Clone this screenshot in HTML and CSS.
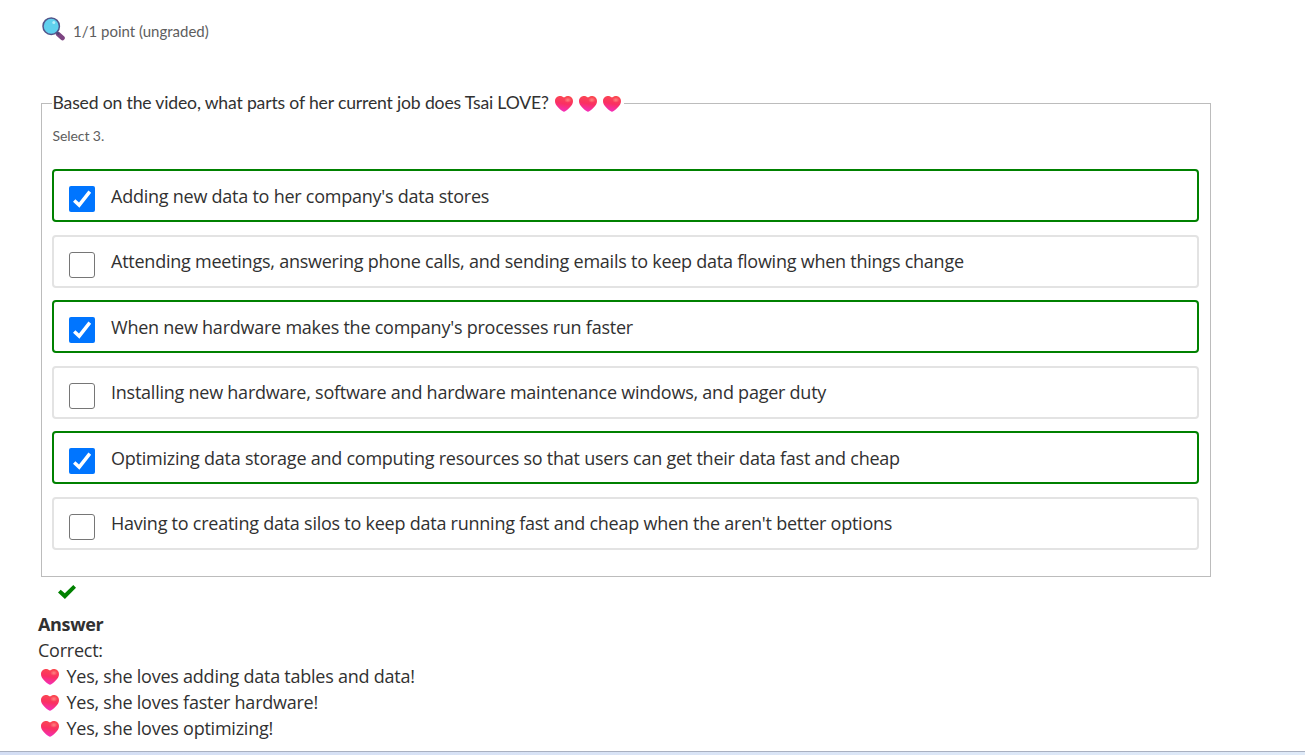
FILE: index.html
```html
<!DOCTYPE html>
<html lang="en">
<head>
<meta charset="utf-8">
<title>Problem</title>
<link rel="stylesheet" href="styles.css">
</head>
<body>
<svg class="defs" aria-hidden="true">
  <defs>
    <linearGradient id="heart-fill" x1="0.65" y1="0" x2="0.45" y2="1">
      <stop offset="0" stop-color="#fb4a50"/>
      <stop offset="0.5" stop-color="#fa3063"/>
      <stop offset="1" stop-color="#f42fbd"/>
    </linearGradient>
    <radialGradient id="heart-shine">
      <stop offset="0" stop-color="#ff8d86" stop-opacity=".9"/>
      <stop offset="1" stop-color="#ff8d86" stop-opacity="0"/>
    </radialGradient>
    <symbol id="heart" viewBox="0 0 18 16">
      <path fill="url(#heart-fill)" d="M9 1.600C7.900.6 6.500 0 5 0 2.200 0 0 2.200 0 5.200c0 4.200 4.400 7.400 7.400 9.900 1 .9 2.200.9 3.200 0C13.600 12.600 18 9.400 18 5.200 18 2.200 15.800 0 13 0 11.500 0 10.100.6 9 1.600z"/>
      <ellipse cx="12.800" cy="4" rx="3.600" ry="2.800" fill="url(#heart-shine)"/>
    </symbol>
    <symbol id="tick" viewBox="0 0 26 26">
      <path d="M5.200 14.500l5 4.600L20.800 5.600" fill="none" stroke="#fff" stroke-width="3.500"/>
    </symbol>
  </defs>
</svg>
<main class="problem">
  <div class="progress">
    <svg class="lens" viewBox="0 0 24 24">
      <path d="M16 17l4.500 4" stroke="#7d4481" stroke-width="4.600" stroke-linecap="round"/>
      <path d="M14.500 15l2.500 2.500" stroke="#4b4775" stroke-width="2"/>
      <circle cx="9.200" cy="9.200" r="8.200" fill="#5fd0ee" stroke="#51548a" stroke-width="1.500"/>
      <circle cx="11.800" cy="5.500" r="1.500" fill="#b5effb"/>
    </svg>
    <span class="points">1/1 point (ungraded)</span>
  </div>
  <fieldset class="choices">
    <legend class="question"><span class="question-text">Based on the video, what parts of her current job does Tsai LOVE?</span><svg class="heart"><use href="#heart"/></svg><svg class="heart"><use href="#heart"/></svg><svg class="heart"><use href="#heart"/></svg></legend>
    <p class="hint">Select 3.</p>
    <div class="choice correct"><svg class="box checked"><use href="#tick"/></svg><span>Adding new data to her company's data stores</span></div>
    <div class="choice"><span class="box"></span><span>Attending meetings, answering phone calls, and sending emails to keep data flowing when things change</span></div>
    <div class="choice correct"><svg class="box checked"><use href="#tick"/></svg><span>When new hardware makes the company's processes run faster</span></div>
    <div class="choice"><span class="box"></span><span>Installing new hardware, software and hardware maintenance windows, and pager duty</span></div>
    <div class="choice correct"><svg class="box checked"><use href="#tick"/></svg><span>Optimizing data storage and computing resources so that users can get their data fast and cheap</span></div>
    <div class="choice"><span class="box"></span><span>Having to creating data silos to keep data running fast and cheap when the aren't better options</span></div>
  </fieldset>
  <svg class="status" viewBox="0 0 18 14"><path d="M0 7.500L2.700 4.700 6.800 8.300 15.300 0 18 2.800 6.900 14z" fill="#008100"/></svg>
  <section class="answer">
    <div class="answer-title">Answer</div>
    <div>Correct:</div>
    <div class="feedback"><svg class="heart"><use href="#heart"/></svg><span>Yes, she loves adding data tables and data!</span></div>
    <div class="feedback"><svg class="heart"><use href="#heart"/></svg><span>Yes, she loves faster hardware!</span></div>
    <div class="feedback"><svg class="heart"><use href="#heart"/></svg><span>Yes, she loves optimizing!</span></div>
  </section>
</main>
<footer class="taskbar"></footer>
</body>
</html>
```
FILE: styles.css
```css
* { box-sizing: border-box; }
body {
  margin: 0;
  height: 755px;
  overflow: hidden;
  display: flex;
  flex-direction: column;
  background: #fff;
  color: #313131;
  font: 18px/26px "Open Sans", sans-serif;
  letter-spacing: -0.242px;
}
.defs { position: absolute; width: 0; height: 0; }
.problem { flex: 1; padding: 17px 94px 0 38px; }
.progress {
  display: flex;
  height: 73px;
  padding-left: 4px;
  color: #5e5e5e;
  font: 15px/24px "Lato", sans-serif;
  letter-spacing: 0;
}
.lens { width: 24px; height: 24px; }
.points { margin: 2px 0 0 7px; }
.choices {
  margin: 0 0 0 3px;
  padding: 0 11px 26px 10px;
  border: 1px solid #bcbcbc;
  height: 487px;
  min-width: 0;
}
.question {
  display: flex;
  align-items: center;
  gap: 6px;
  height: 26px;
  padding: 0 3px 0 0.5px;
  font: 17.6px/26px "Lato", sans-serif;
  letter-spacing: -0.17px;
}
.heart { width: 18px; height: 16px; flex: none; }
.question .heart { margin-top: 1px; }
.hint {
  margin: 8px 0 21px 0.5px;
  color: #5e5e5e;
  font: 14px/24px "Lato", sans-serif;
  letter-spacing: -0.08px;
}
.choice {
  display: flex;
  height: 53px;
  margin-bottom: 12.5px;
  padding: 12px 15px 0;
  border: 2px solid #e3e3e3;
  border-radius: 4px;
  white-space: nowrap;
}
.choice:not(.correct) > span:last-child { margin-top: -1px; }
.correct { border-color: #008100; }
.box {
  flex: none;
  width: 26px;
  height: 26px;
  margin: 3px 16px 0 0;
  border: 1.5px solid #767676;
  border-radius: 3px;
}
.checked { border: 0; background: #0075ff; border-radius: 2px; }
.status { display: block; width: 18px; height: 14px; margin: 8px 0 0 20px; }
.answer { margin-top: 12px; }
.answer-title { font-weight: 700; letter-spacing: -0.35px; }
.feedback { display: flex; align-items: center; gap: 7.5px; padding-left: 3px; }
.feedback .heart { margin-top: 2px; }
.taskbar {
  height: 4px;
  border-top: 1px solid #a9b0c0;
  background: linear-gradient(90deg, #d4def4, #dfeaf8);
}
```
